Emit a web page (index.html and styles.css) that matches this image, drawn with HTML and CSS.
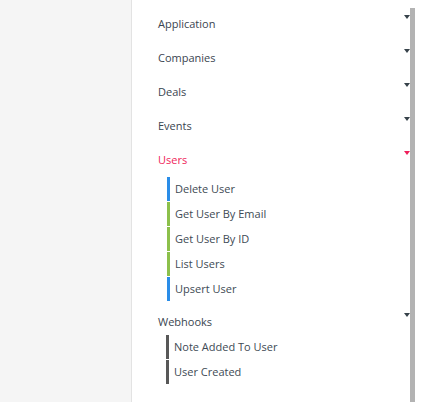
FILE: index.html
```html
<!DOCTYPE html>
<html>
<head>
<meta charset="utf-8">
<link rel="stylesheet" href="styles.css">
</head>
<body>
<div class="page">
  <aside class="side"></aside>
  <nav class="nav">
    <div class="group"><div class="title"><span>Application</span><i class="caret"></i></div></div>
    <div class="group"><div class="title"><span>Companies</span><i class="caret"></i></div></div>
    <div class="group"><div class="title"><span>Deals</span><i class="caret"></i></div></div>
    <div class="group"><div class="title"><span>Events</span><i class="caret"></i></div></div>
    <div class="group active">
      <div class="title"><span>Users</span><i class="caret"></i></div>
      <ul class="sub">
        <li class="blue">Delete User</li>
        <li class="green">Get User By Email</li>
        <li class="green">Get User By ID</li>
        <li class="green">List Users</li>
        <li class="blue">Upsert User</li>
      </ul>
    </div>
    <div class="group hooks">
      <div class="title"><span>Webhooks</span><i class="caret"></i></div>
      <ul class="sub">
        <li class="gray">Note Added To User</li>
        <li class="gray">User Created</li>
      </ul>
    </div>
  </nav>
  <div class="scroll"><div class="thumb"></div></div>
</div>
</body>
</html>
```
FILE: styles.css
```css
html, body {
  margin: 0;
  padding: 0;
  background: #fff;
  height: 100%;
}
.page {
  display: flex;
  height: 402px;
  overflow: hidden;
  font-family: "Open Sans", "DejaVu Sans", sans-serif;
  font-size: 11px;
  color: #3a4550;
}
.side {
  width: 131px;
  flex: none;
  background: #f5f5f5;
  border-right: 1px solid #e3e3e3;
}
.nav {
  flex: 1;
  padding: 7px 0 0 26px;
}
.title {
  display: flex;
  justify-content: space-between;
  line-height: 16px;
  padding: 9px 0;
}
.caret {
  width: 0;
  height: 0;
  border-left: 3.5px solid transparent;
  border-right: 3.5px solid transparent;
  border-top: 4px solid #37424a;
  margin-top: -1px;
}
.active .title { color: #ef1e5a; }
.active .caret { border-top-color: #ef1e5a; }
.sub {
  list-style: none;
  margin: 0 0 0 9px;
  padding: 0;
  display: flex;
  flex-direction: column;
  gap: 1px;
}
.sub li {
  height: 24px;
  line-height: 23px;
  padding-left: 5px;
  border-left: 3px solid;
  color: #404a54;
}
.blue { border-color: #2a8de8 !important; }
.green { border-color: #8cc04b !important; }
.gray { border-color: #585858 !important; }
.hooks { margin-top: 4px; }
.hooks .title { padding-bottom: 5px; }
.hooks .sub { margin: 0 0 0 8px; }
.scroll {
  width: 5px;
  flex: none;
  margin-right: 11px;
  padding-top: 8px;
}
.thumb {
  height: 100%;
  background: #b3b3b3;
}
```
